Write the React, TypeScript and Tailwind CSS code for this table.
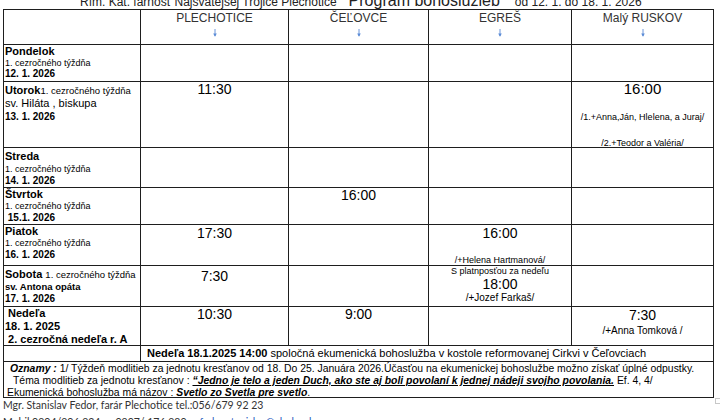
import React from 'react';

const Arrow = () => (
  <svg width="6" height="8" viewBox="0 0 6 8" className="mx-auto mt-[4px]">
    <path d="M3 0 V7" stroke="#5b8bd6" strokeWidth="0.9" />
    <path d="M1.2 4.6 L3 7.8 L4.8 4.6 Z" fill="#5b8bd6" />
  </svg>
);

const Day: React.FC<{ children: React.ReactNode }> = ({ children }) => (
  <div className="bg-white pl-px text-black flex flex-col">{children}</div>
);

const Time: React.FC<{ t: string; className?: string }> = ({ t, className = '' }) => (
  <div className={`text-[14px] leading-[14px] text-center ${className}`}>{t}</div>
);

const Cell: React.FC<{ children?: React.ReactNode; className?: string }> = ({ children, className = '' }) => (
  <div className={`bg-white text-black ${className}`}>{children}</div>
);

const places = ['PLECHOTICE', 'ČEĽOVCE', 'EGREŠ', 'Malý RUSKOV'];

export default function App() {
  return (
    <div className="relative w-[720px] h-[420px] overflow-hidden bg-white font-['Liberation_Sans',Arial,sans-serif] text-black">
      {/* title, cut off by the top edge */}
      <div className="h-[9px] overflow-hidden">
        <div className="flex items-baseline -mt-[11px] pl-[80px] text-[#222]">
          <span className="text-[12px]">Rím. Kat. farnosť Najsvätejšej Trojice Plechotice</span>
          <span className="text-[16px] ml-[12px]">Program bohoslužieb</span>
          <span className="text-[12px] ml-[15px]">od 12. 1. do 18. 1. 2026</span>
        </div>
      </div>

      <div className="ml-[3px] w-[711px] grid grid-cols-[136px_147px_139px_142px_141px] grid-rows-[34px_36px_65px_39px_36px_40px_40px_38px_15px_35px] gap-px bg-[#1e1e1e] border border-[#1e1e1e]">
        {/* header */}
        <Cell />
        {places.map((p) => (
          <Cell key={p} className="text-center pt-px">
            <div className="text-[12px] leading-[14px] text-[#333]">{p}</div>
            <Arrow />
          </Cell>
        ))}

        {/* Pondelok */}
        <Day>
          <span className="text-[11px] font-bold leading-[13px]">Pondelok</span>
          <span className="text-[9px] leading-[10px]">1. cezročného týždňa</span>
          <span className="text-[10px] font-bold leading-[12px]">12. 1. 2026</span>
        </Day>
        <Cell />
        <Cell />
        <Cell />
        <Cell />

        {/* Utorok */}
        <Day>
          <span className="leading-[13px]">
            <span className="text-[11px] font-bold">Utorok</span>
            <span className="text-[9.5px]">1. cezročného týždňa</span>
          </span>
          <span className="text-[11px] leading-[13px]">sv. Hiláta , biskupa</span>
          <span className="text-[10px] font-bold leading-[13px]">13. 1. 2026</span>
        </Day>
        <Cell>
          <Time t="11:30" />
        </Cell>
        <Cell />
        <Cell />
        <Cell className="text-center">
          <Time t="16:00" className="text-[15px]" />
          <div className="text-[9px] leading-[11px] mt-[16px]">/1.+Anna,Ján, Hlelena, a Juraj/</div>
          <div className="text-[9px] leading-[11px] mt-[15px]">/2.+Teodor a Valéria/</div>
        </Cell>

        {/* Streda */}
        <Day>
          <span className="text-[11px] font-bold leading-[13px] mt-[2px]">Streda</span>
          <span className="text-[9px] leading-[12px]">1. cezročného týždňa</span>
          <span className="text-[10px] font-bold leading-[11px]">14. 1. 2026</span>
        </Day>
        <Cell />
        <Cell />
        <Cell />
        <Cell />

        {/* Štvrtok */}
        <Day>
          <span className="text-[11px] font-bold leading-[12px]">Štvrtok</span>
          <span className="text-[9px] leading-[12px]">1. cezročného týždňa</span>
          <span className="text-[10px] font-bold leading-[12px]">&nbsp;15.1. 2026</span>
        </Day>
        <Cell />
        <Cell>
          <Time t="16:00" />
        </Cell>
        <Cell />
        <Cell />

        {/* Piatok */}
        <Day>
          <span className="text-[11px] font-bold leading-[12px]">Piatok</span>
          <span className="text-[9px] leading-[12px]">1. cezročného týždňa</span>
          <span className="text-[10px] font-bold leading-[12px]">16. 1. 2026</span>
        </Day>
        <Cell>
          <Time t="17:30" className="mt-[1px]" />
        </Cell>
        <Cell />
        <Cell className="text-center flex flex-col justify-between">
          <Time t="16:00" className="mt-[1px]" />
          <div className="text-[9px] leading-[10px]">/+Helena Hartmanová/</div>
        </Cell>
        <Cell />

        {/* Sobota */}
        <Day>
          <span className="leading-[13px]">
            <span className="text-[11px] font-bold">Sobota </span>
            <span className="text-[9.5px]">1. cezročného týždňa</span>
          </span>
          <span className="text-[9.5px] font-bold leading-[12px]">sv. Antona opáta</span>
          <span className="text-[10px] font-bold leading-[12px]">17. 1. 2026</span>
        </Day>
        <Cell>
          <Time t="7:30" className="mt-[3px]" />
        </Cell>
        <Cell />
        <Cell className="text-center">
          <div className="text-[9px] leading-[10px]">S platnposťou za nedeľu</div>
          <Time t="18:00" className="mt-[1px]" />
          <div className="text-[10px] leading-[12px] mt-[1px]">/+Jozef Farkaš/</div>
        </Cell>
        <Cell />

        {/* Nedeľa */}
        <Day>
          <span className="text-[11px] font-bold leading-[13px]">&nbsp;Nedeľa</span>
          <span className="text-[11px] font-bold leading-[13px]">18. 1. 2025</span>
          <span className="text-[11px] font-bold leading-[13px]">&nbsp;2. cezročná nedeľa r. A</span>
        </Day>
        <Cell>
          <Time t="10:30" />
        </Cell>
        <Cell>
          <Time t="9:00" />
        </Cell>
        <Cell />
        <Cell className="text-center">
          <Time t="7:30" className="mt-[1px]" />
          <div className="text-[10px] leading-[12px] mt-[3px]">/+Anna Tomková /</div>
        </Cell>

        {/* ecumenical service row */}
        <Cell />
        <Cell className="col-span-4 pl-[6px] text-[11px] leading-[15px]">
          <span className="font-bold">Nedeľa 18.1.2025 14:00</span> spoločná ekumenická bohoslužba v kostole reformovanej Cirkvi v Čeľovciach
        </Cell>

        {/* announcements */}
        <Cell className="col-span-5 text-[10.4px] leading-[12px] pt-[1px] whitespace-nowrap">
          <div className="pl-[6px]">
            <span className="font-bold italic">Oznamy :</span> 1/ Týždeň modlitieb za jednotu kresťanov od 18. Do 25. Januára 2026.Účasťou na ekumenickej bohoslužbe možno získať úplné odpustky.
          </div>
          <div className="pl-[9px]">
            Téma modlitieb za jednotu kresťanov :{' '}
            <span className="font-bold italic underline">
              “Jedno je telo a jeden Duch, ako ste aj boli povolaní k jednej nádeji svojho povolania.
            </span>{' '}
            Ef. 4, 4/
          </div>
          <div className="pl-[3px]">
            Ekumenická bohoslužba má názov : <span className="font-bold italic">Svetlo zo Svetla pre svetlo</span>.
          </div>
        </Cell>
      </div>

      <div className="font-['Lato',sans-serif] text-[10.5px] text-[#333] pl-[3px] leading-[14px]">
        <div>Mgr. Stanislav Fedor, farár Plechotice tel.:056/679 92 23</div>
        <div className="flex mt-[3px]">
          <span>Mobil 0904/906 924</span>
          <span className="ml-[15px]">0907/ 176 980</span>
          <span className="ml-[13px] text-[#2f5fbf]">fedor.stanislav@abuke.sk</span>
        </div>
      </div>

      <div className="absolute left-[715px] top-[398px] w-[6px] h-[6px] border border-[#c8c8c8]" />
    </div>
  );
}
